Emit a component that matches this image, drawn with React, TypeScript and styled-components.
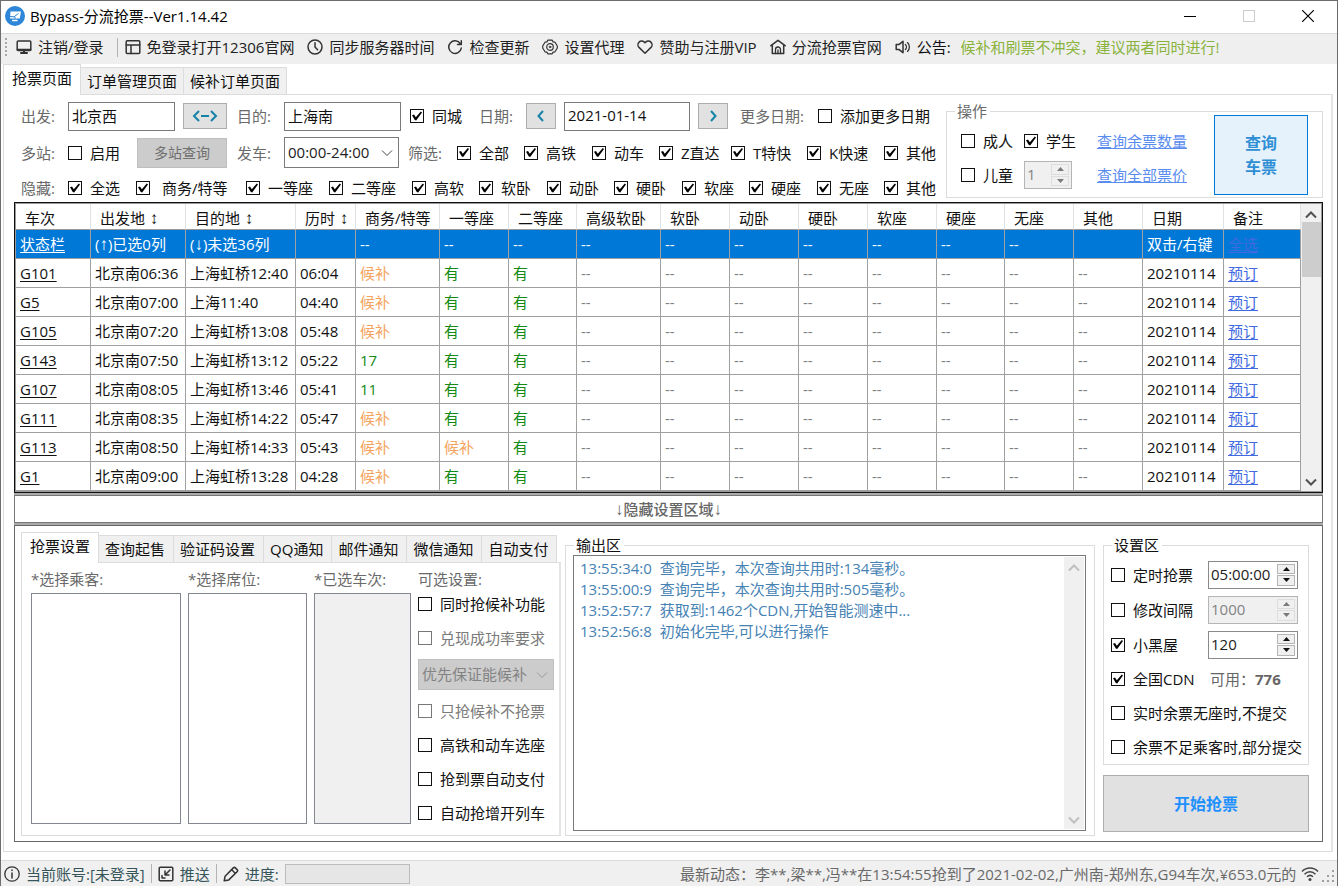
import React from "react";
import styled, { createGlobalStyle, css } from "styled-components";

const GlobalStyle = createGlobalStyle`
  * { box-sizing: border-box; }
  body { margin: 0; background: #ffffff; }
  body, button, input, select, textarea {
    font-family: "Open Sans", "Noto Sans CJK SC", sans-serif;
    font-size: 15px;
    line-height: 20px;
    color: #111111;
  }
`;

/* ---------- window frame ---------- */

const Window = styled.div`
  display: flex;
  flex-direction: column;
  min-height: 100vh;
  border: 1px solid #6e6c6e;
  border-bottom: 0;
  background: #ffffff;
`;

const TitleBar = styled.header`
  display: flex;
  align-items: center;
  height: 32px;
  padding: 0 0 2px 4px;
`;

const Title = styled.h1`
  flex: 1;
  margin: 0 0 0 5px;
  font-size: 15px;
  font-weight: 400;
  color: #000000;
`;

const CaptionButton = styled.button`
  display: flex;
  align-items: center;
  justify-content: center;
  width: 59px;
  height: 30px;
  padding: 0;
  border: 0;
  background: none;
`;

const Toolbar = styled.nav`
  display: flex;
  align-items: center;
  gap: 13px;
  height: 31px;
  padding: 0 0 4px 4px;
  border-top: 1px solid #dadada;
  background: #efefef;
  white-space: nowrap;
  overflow: hidden;
`;

const ToolItem = styled.button`
  display: flex;
  align-items: center;
  gap: 6px;
  padding: 0;
  border: 0;
  background: none;
  color: #222222;
`;

const Notice = styled.div`
  display: flex;
  align-items: center;
  gap: 6px;
  & > b { font-weight: 400; margin-right: 4px; }
  & > span { color: #8ab33c; }
`;

const Grip = styled.span`
  width: 2px;
  height: 18px;
  margin-right: -4px;
  background: repeating-linear-gradient(#a8a8a8 0 2px, transparent 2px 4px);
`;

const Divider = styled.span`
  width: 1px;
  height: 19px;
  background: #b4b4b4;
`;

const ToolDivider = styled(Divider)`
  margin-right: -6px;
`;

/* ---------- tabs ---------- */

const Tab = styled.button<{ $active?: boolean }>`
  position: relative;
  height: 27px;
  padding: 0 6px 0 6px;
  border: 1px solid #dcdcdc;
  border-left: 0;
  border-bottom: 0;
  background: #f0f0f0;
  white-space: nowrap;
  ${(p) =>
    p.$active &&
    css`
      height: 31px;
      margin-bottom: -1px;
      padding: 0 8px 4px 8px;
      border-left: 1px solid #dcdcdc;
      background: #ffffff;
    `}
`;

const TabList = styled.div<{ $roomy?: boolean }>`
  display: flex;
  align-items: flex-end;
  height: 30px;
  & > ${Tab} {
    ${(p) => p.$roomy && "padding-right: 8px;"}
  }
`;

const Page = styled.main`
  display: flex;
  flex: 1;
  flex-direction: column;
  margin: 0 4px 0 2px;
`;

const PageBody = styled.section`
  display: flex;
  flex: 1;
  flex-direction: column;
  padding: 6px 8px 9px 10px;
  border: 1px solid #dcdcdc;
  border-right: 2px solid #e4e4e4;
`;

/* ---------- form parts ---------- */

const Caption = styled.label`
  color: #6a6a6a;
  white-space: nowrap;
`;

const CheckLabel = styled.label<{ $wide?: boolean; $muted?: boolean }>`
  display: inline-flex;
  align-items: center;
  gap: ${(p) => (p.$wide ? 12 : 8)}px;
  color: ${(p) => (p.$muted ? "#7a7a7a" : "#111111")};
  white-space: nowrap;
`;

const CheckBox = styled.input`
  appearance: none;
  flex: none;
  display: grid;
  place-items: center;
  width: 14px;
  height: 14px;
  margin: 0;
  border: 1px solid #111111;
  background: #ffffff;
  &:disabled { border-color: #777777; }
  &:checked::before {
    content: "";
    width: 10px;
    height: 10px;
    background: #000000;
    clip-path: polygon(0 42%, 20% 36%, 38% 62%, 88% 4%, 100% 16%, 42% 94%, 28% 90%);
  }
`;

type CheckProps = {
  text: string;
  on?: boolean;
  wide?: boolean;
  disabled?: boolean;
};

const Check = ({ text, on, wide, disabled }: CheckProps) => (
  <CheckLabel $wide={wide} $muted={disabled}>
    <CheckBox type="checkbox" defaultChecked={on} disabled={disabled} />
    {text}
  </CheckLabel>
);

const TextBox = styled.input<{ $w: number }>`
  width: ${(p) => p.$w}px;
  height: 29px;
  padding: 0 3px 2px;
  border: 1px solid #7a7a7a;
  background: #ffffff;
`;

const SmallButton = styled.button<{ $w: number }>`
  display: flex;
  align-items: center;
  justify-content: center;
  width: ${(p) => p.$w}px;
  height: 26px;
  padding: 0;
  border: 1px solid #adadad;
  background: #e1e1e1;
`;

const FlatButton = styled(SmallButton)`
  height: 30px;
  border-color: #bfbfbf;
  background: #cccccc;
  font-size: 14px;
  color: #6f6f6f;
`;

const SelectWrap = styled.span<{ $w: number; $muted?: boolean }>`
  display: inline-flex;
  align-items: center;
  width: ${(p) => p.$w}px;
  height: 31px;
  border: 1px solid ${(p) => (p.$muted ? "#bfbfbf" : "#7a7a7a")};
  background: ${(p) => (p.$muted ? "#cccccc" : "#ffffff")};
  & > select {
    flex: 1;
    min-width: 0;
    padding: 0 0 2px 3px;
    border: 0;
    appearance: none;
    background: none;
    color: ${(p) => (p.$muted ? "#838383" : "#222222")};
    opacity: 1;
  }
  & > svg { flex: none; margin-right: 4px; }
`;

const SpinWrap = styled.span<{ $w: number; $muted?: boolean }>`
  display: flex;
  width: ${(p) => p.$w}px;
  height: 28px;
  padding: 2px;
  border: 1px solid ${(p) => (p.$muted ? "#b5b5b5" : "#8a8a8a")};
  background: ${(p) => (p.$muted ? "#f0f0f0" : "#ffffff")};
  & > input {
    flex: 1;
    min-width: 0;
    width: 0;
    padding: 0 0 2px;
    border: 0;
    background: none;
    color: ${(p) => (p.$muted ? "#838383" : "#222222")};
  }
`;

const SpinButtons = styled.span`
  display: grid;
  grid-template-rows: 1fr 1fr;
  gap: 1px;
  width: 18px;
`;

const SpinButton = styled.button<{ $muted?: boolean }>`
  display: grid;
  place-items: center;
  padding: 0;
  border: 1px solid ${(p) => (p.$muted ? "#dddddd" : "#b5b5b5")};
  background: #f0f0f0;
  color: ${(p) => (p.$muted ? "#7a7a7a" : "#111111")};
`;

const Triangle = ({ down }: { down?: boolean }) => (
  <svg width="7" height="4" viewBox="0 0 7 4">
    <path d={down ? "M0 0h7L3.500 4z" : "M0 4h7L3.500 0z"} fill="currentColor" />
  </svg>
);

type SpinProps = { value: string; label: string; w: number; disabled?: boolean };

const Spin = ({ value, label, w, disabled }: SpinProps) => (
  <SpinWrap $w={w} $muted={disabled}>
    <input type="text" aria-label={label} defaultValue={value} disabled={disabled} />
    <SpinButtons>
      <SpinButton aria-label={label + "增加"} $muted={disabled} disabled={disabled}>
        <Triangle />
      </SpinButton>
      <SpinButton aria-label={label + "减少"} $muted={disabled} disabled={disabled}>
        <Triangle down />
      </SpinButton>
    </SpinButtons>
  </SpinWrap>
);

type ChevronProps = { dir: "up" | "down" | "left" | "right"; color: string; width?: number };

const chevronPaths = {
  up: "M2 9.500L7 4.500L12 9.500",
  down: "M2 4.500L7 9.500L12 4.500",
  left: "M9 2L4.500 7L9 12",
  right: "M5 2L9.500 7L5 12",
};

const Chevron = ({ dir, color, width = 2 }: ChevronProps) => (
  <svg width="14" height="14" viewBox="0 0 14 14" fill="none" stroke={color} strokeWidth={width}>
    <path d={chevronPaths[dir]} />
  </svg>
);

const Group = styled.fieldset`
  min-width: 0;
  margin: 0;
  padding: 0;
  border: 1px solid #dcdcdc;
`;

const Legend = styled.legend<{ $muted?: boolean }>`
  margin-left: 8px;
  padding: 0 3px 0 2px;
  height: 20px;
  color: ${(p) => (p.$muted ? "#6a6a6a" : "#111111")};
`;

/* ---------- filters ---------- */

const Filters = styled.div`
  display: flex;
  justify-content: space-between;
  padding-left: 7px;
  height: 101px;
`;

const FilterRows = styled.div`
  display: grid;
  grid-template-rows: 30px 43px 28px;
`;

const FilterRow = styled.div<{ $cols: string }>`
  display: grid;
  grid-template-columns: ${(p) => p.$cols};
  align-items: center;
  justify-items: start;
`;

const ActionGroup = styled(Group)`
  width: 377px;
  margin-bottom: 4px;
`;

const Actions = styled.div`
  display: grid;
  grid-template-columns: 63px 66px auto 94px;
  grid-template-rows: 34px 34px;
  align-items: center;
  padding: 3px 14px 0 14px;
`;

const ActionLink = styled.a`
  padding-left: 7px;
  color: #5b8def;
  text-decoration: underline;
`;

const QueryButton = styled.button`
  grid-column: 4;
  grid-row: 1 / 3;
  align-self: start;
  height: 80px;
  margin-top: -9px;
  padding: 0 24px;
  border: 1px solid #0078d7;
  background: #e5f1fb;
  color: #2f8fd5;
  font-size: 16px;
  font-weight: 700;
  line-height: 24px;
`;

/* ---------- table ---------- */

const Stack = styled.div`
  display: flex;
  flex: 1;
  flex-direction: column;
  gap: 2px;
  background: #ababab;
`;

const TableFrame = styled.div`
  display: flex;
  border: 1px solid #111111;
  outline: 1px solid #999999;
  outline-offset: -2px;
  padding: 1px;
  background: #ffffff;
`;

const Trains = styled.table`
  flex: 1;
  width: 0;
  table-layout: fixed;
  border-collapse: separate;
  border-spacing: 0;
`;

const HeadCell = styled.th`
  height: 26px;
  padding: 2px 0 0 9px;
  border-right: 1px solid #e2e2e2;
  border-bottom: 1px solid #999999;
  font-weight: 400;
  text-align: left;
  white-space: nowrap;
`;

const Row = styled.tr<{ $selected?: boolean }>`
  background: ${(p) => (p.$selected ? "#0078d7" : "#ffffff")};
`;

const toneColors = {
  text: "#111111",
  light: "#ffffff",
  wait: "#f4a460",
  have: "#138a13",
  none: "#808080",
  ghost: "#4169e1",
};

type Tone = keyof typeof toneColors;

const Cell = styled.td<{ $tone: Tone }>`
  height: 29px;
  padding: 0 0 0 4px;
  border-right: 1px solid #a0a0a0;
  border-bottom: 1px solid #a0a0a0;
  color: ${(p) => toneColors[p.$tone]};
  white-space: nowrap;
  overflow: hidden;
  & > a { color: inherit; text-underline-offset: 2px; }
`;

const Arrow = styled.span`
  font-family: "Liberation Sans", sans-serif;
  font-size: 17px;
  line-height: 16px;
`;

const ScrollTrack = styled.div`
  display: flex;
  flex: none;
  flex-direction: column;
  justify-content: space-between;
  align-items: center;
  width: 20px;
  padding: 4px 0 2px;
  background: #f0f0f0;
`;

const Thumb = styled.div`
  align-self: stretch;
  height: 55px;
  margin: 0 0 auto 1px;
  background: #cdcdcd;
`;

const Splitter = styled.button`
  height: 28px;
  padding: 0;
  border: 1px solid #777777;
  background: #ffffff;
  color: #666666;
  font-weight: 500;
`;

/* ---------- settings ---------- */

const Settings = styled.div`
  display: flex;
  flex: 1;
  padding: 6px 13px 5px 6px;
  border: 1px solid #666666;
  background: #ffffff;
`;

const TabbedArea = styled.div`
  display: flex;
  flex-direction: column;
  width: 540px;
  margin-right: 4px;
`;

const TabbedBody = styled.div`
  display: grid;
  flex: 1;
  grid-template-columns: 150px 119px 97px 136px;
  grid-template-rows: 18px auto;
  column-gap: 7px;
  padding: 6px 5px 11px 9px;
  border: 1px solid #dcdcdc;
  border-right: 2px solid #e4e4e4;
`;

const ListBox = styled.div<{ $muted?: boolean }>`
  min-height: 231px;
  margin-top: 6px;
  border: 1px solid #828790;
  background: ${(p) => (p.$muted ? "#f0f0f0" : "#ffffff")};
`;

const Options = styled.div`
  display: grid;
  grid-template-rows: 34px 34px 39px 34px 34px 34px 34px;
  align-content: start;
  align-items: center;
  height: 0;
`;

const OutputGroup = styled(Group)`
  display: flex;
  flex: 1;
  margin: 3px 8px 0 0;
`;

const OutputBox = styled.div`
  display: flex;
  flex: 1;
  margin: 0 8px 4px 7px;
  padding: 1px;
  border: 1px solid #7a7a7a;
`;

const OutputText = styled.textarea`
  flex: 1;
  min-width: 0;
  padding: 1px 0 0 5px;
  border: 0;
  resize: none;
  overflow: hidden;
  background: #ffffff;
  color: #4682b4;
  line-height: 21px;
`;

const SidePanel = styled.div`
  display: flex;
  flex-direction: column;
  gap: 10px;
  width: 206px;
  margin-top: 3px;
`;

const SideRows = styled.div`
  display: grid;
  grid-template-rows: 35px 35px 35px 34px 34px 34px;
  padding: 2px 7px 0 7px;
`;

const SideRow = styled.div`
  display: grid;
  grid-template-columns: 97px auto;
  align-items: center;
`;

const Available = styled.span`
  padding-left: 2px;
  color: #666666;
  white-space: nowrap;
`;

const StartButton = styled.button`
  height: 57px;
  border: 1px solid #adadad;
  background: #e1e1e1;
  color: #1e90ff;
  font-size: 16px;
  font-weight: 700;
`;

/* ---------- status bar ---------- */

const StatusBar = styled.footer`
  display: flex;
  align-items: center;
  gap: 6px;
  height: 27px;
  margin-top: 8px;
  padding: 0 3px 1px;
  border-top: 1px solid #dadada;
  background: #f0f0f0;
  white-space: nowrap;
`;

const StatusItem = styled.span`
  display: flex;
  align-items: center;
  gap: 6px;
  color: #35555a;
`;

const ProgressBar = styled.div`
  width: 125px;
  height: 20px;
  border: 1px solid #bcbcbc;
  background: #e6e6e6;
`;

const Ticker = styled.div`
  width: 621px;
  min-width: 0;
  margin-left: auto;
  overflow: hidden;
  color: #696969;
`;

const Signal = styled.span`
  display: flex;
  gap: 3px;
  align-items: flex-end;
  margin-left: -6px;
`;

/* ---------- icons ---------- */

const Icon = ({ children }: { children: React.ReactNode }) => (
  <svg width="16" height="16" viewBox="0 0 16 16" fill="none" stroke="#333333" strokeWidth="1.500" strokeLinejoin="round" strokeLinecap="round">
    {children}
  </svg>
);

const icons = {
  monitor: (
    <Icon>
      <rect x="1.200" y="2" width="13.600" height="9.500" rx="1" />
      <path d="M1.500 10.700h13M5 14h6M8 11.500V14" strokeWidth="2" />
    </Icon>
  ),
  layout: (
    <Icon>
      <rect x="1.200" y="1.700" width="13.600" height="12.800" rx="1" />
      <path d="M1.200 6h13.600M6 6v8.500" />
    </Icon>
  ),
  clock: (
    <Icon>
      <circle cx="8" cy="8" r="7" />
      <path d="M8 3.800V8l2.600 2.800" />
    </Icon>
  ),
  refresh: (
    <Icon>
      <path d="M13.400 4.800A6.300 6.300 0 1 0 14.300 9M14.300 1.800v3.700h-3.800" />
    </Icon>
  ),
  gear: (
    <Icon>
      <path d="M5.800 1.200h4.400l.9 1.700 1.900.3L15.300 7v2l-2.300 3.800-1.900.3-.9 1.700H5.800l-.9-1.700-1.900-.3L.7 9V7L3 3.200l1.900-.3z" strokeWidth="1.200" />
      <circle cx="8" cy="8" r="3.300" strokeWidth="1.200" />
      <circle cx="8" cy="8" r="0.800" strokeWidth="1" />
    </Icon>
  ),
  heart: (
    <Icon>
      <path d="M8 14.300L2 8.400C.6 6.900.7 4.500 2.100 3.100c1.500-1.500 4.200-1.400 5.900.7 1.700-2.100 4.400-2.200 5.900-.7 1.400 1.400 1.500 3.800.1 5.300z" />
    </Icon>
  ),
  home: (
    <Icon>
      <path d="M.9 6.700L8 1.300l7.100 5.400M2.300 6v8.500h11.400V6" />
      <path d="M5.500 14.500v-4a2.500 2.500 0 0 1 5 0v4M8 11v3.500" strokeWidth="1.300" />
    </Icon>
  ),
  sound: (
    <Icon>
      <path d="M1.200 5.600h2.600L8 2.300v11.400l-4.200-3.300H1.200z" />
      <path d="M10.400 5.500c1.300 1.300 1.300 3.700 0 5M12.500 3.600c2.500 2.300 2.500 6.500 0 8.800" strokeWidth="1.300" />
    </Icon>
  ),
  info: (
    <Icon>
      <circle cx="8" cy="8" r="7.200" strokeWidth="1.300" />
      <path d="M8 7v5M8 4v.5" />
    </Icon>
  ),
  push: (
    <Icon>
      <rect x="1.200" y="1.200" width="13.600" height="13.600" rx="1" />
      <path d="M12 4L7.500 8.500M7 5v4h4M4 9.500V12h3" />
    </Icon>
  ),
  pencil: (
    <Icon>
      <path d="M1.200 14.800l.9-4.600 8.200-8.300a1.500 1.500 0 0 1 2.100 0l1.700 1.700a1.500 1.500 0 0 1 0 2.100l-8.300 8.200zM9 4l3.200 3.200" />
    </Icon>
  ),
};

const Logo = () => (
  <svg width="20" height="20" viewBox="0 0 20 20">
    <circle cx="10" cy="10" r="10" fill="#2e86d9" />
    <path d="M5.500 5.500h10.500l-1.300 7H5z" fill="#ffffff" />
    <path d="M5 10.500l4 .3 4.500-3.300M9 10.800l2 1.700" stroke="#2e86d9" strokeWidth="1" fill="none" />
    <path d="M7 14.500h5.500" stroke="#ffffff" strokeWidth="1.500" />
  </svg>
);

/* ---------- data ---------- */

const tools: [keyof typeof icons, string][] = [
  ["layout", "免登录打开12306官网"],
  ["clock", "同步服务器时间"],
  ["refresh", "检查更新"],
  ["gear", "设置代理"],
  ["heart", "赞助与注册VIP"],
  ["home", "分流抢票官网"],
];

const columns: [string, number, string?][] = [
  ["车次", 75],
  ["出发地", 95, "↕"],
  ["目的地", 110, "↕"],
  ["历时", 60, "↕"],
  ["商务/特等", 84],
  ["一等座", 69],
  ["二等座", 68],
  ["高级软卧", 84],
  ["软卧", 69],
  ["动卧", 69],
  ["硬卧", 69],
  ["软座", 69],
  ["硬座", 68],
  ["无座", 69],
  ["其他", 69],
  ["日期", 81],
  ["备注", 77],
];

const trains: [string, string, string, string, string, string][] = [
  ["G101", "北京南06:36", "上海虹桥12:40", "06:04", "候补", "有"],
  ["G5", "北京南07:00", "上海11:40", "04:40", "候补", "有"],
  ["G105", "北京南07:20", "上海虹桥13:08", "05:48", "候补", "有"],
  ["G143", "北京南07:50", "上海虹桥13:12", "05:22", "17", "有"],
  ["G107", "北京南08:05", "上海虹桥13:46", "05:41", "11", "有"],
  ["G111", "北京南08:35", "上海虹桥14:22", "05:47", "候补", "有"],
  ["G113", "北京南08:50", "上海虹桥14:33", "05:43", "候补", "候补"],
  ["G1", "北京南09:00", "上海虹桥13:28", "04:28", "候补", "有"],
];

const seatTone = (s: string): Tone => (s === "候补" ? "wait" : "have");
const blanks = Array.from({ length: 8 }, (_, i) => i);

const trainTypes = ["全部", "高铁", "动车", "Z直达", "T特快", "K快速", "其他"];
const seatTypes = ["全选", "商务/特等", "一等座", "二等座", "高软", "软卧", "动卧", "硬卧", "软座", "硬座", "无座", "其他"];

const log = [
  "13:55:34:0  查询完毕，本次查询共用时:134毫秒。",
  "13:55:00:9  查询完毕，本次查询共用时:505毫秒。",
  "13:52:57:7  获取到:1462个CDN,开始智能测速中...",
  "13:52:56:8  初始化完毕,可以进行操作",
].join("\n");

/* ---------- sections ---------- */

const FilterArea = () => (
  <Filters>
    <FilterRows>
      <FilterRow $cols="47px 115px 54px 47px 126px 69px 47px 38px 134px 42px 78px auto">
        <Caption htmlFor="from">出发:</Caption>
        <TextBox id="from" $w={107} defaultValue="北京西" />
        <SmallButton $w={44} aria-label="交换">
          <svg width="26" height="12" viewBox="0 0 26 12" fill="none" stroke="#1583a8" strokeWidth="2">
            <path d="M7 1L2 6l5 5M19 1l5 5-5 5M9 6h8" />
          </svg>
        </SmallButton>
        <Caption htmlFor="to">目的:</Caption>
        <TextBox id="to" $w={117} defaultValue="上海南" />
        <Check text="同城" on />
        <Caption htmlFor="date">日期:</Caption>
        <SmallButton $w={30} aria-label="前一天">
          <Chevron dir="left" color="#1583a8" />
        </SmallButton>
        <TextBox id="date" $w={126} defaultValue="2021-01-14" />
        <SmallButton $w={30} aria-label="后一天">
          <Chevron dir="right" color="#1583a8" />
        </SmallButton>
        <Caption as="span">更多日期:</Caption>
        <Check text="添加更多日期" />
      </FilterRow>
      <FilterRow $cols="47px 69px 100px 47px 124px 49px 67px 68px 67px 72px 76px 77px auto">
        <Caption as="span">多站:</Caption>
        <Check text="启用" />
        <FlatButton $w={90} disabled>多站查询</FlatButton>
        <Caption htmlFor="depart">发车:</Caption>
        <SelectWrap $w={115}>
          <select id="depart">
            <option>00:00-24:00</option>
          </select>
          <Chevron dir="down" color="#444444" width={1} />
        </SelectWrap>
        <Caption as="span">筛选:</Caption>
        {trainTypes.map((t) => (
          <Check key={t} text={t} on />
        ))}
      </FilterRow>
      <FilterRow $cols="47px 68px 110px 83px 83px 67px 68px 67px 68px 67px 68px 67px auto">
        <Caption as="span">隐藏:</Caption>
        {seatTypes.map((t, i) => (
          <Check key={t} text={t} on wide={i === 1} />
        ))}
      </FilterRow>
    </FilterRows>
    <ActionGroup>
      <Legend $muted>操作</Legend>
      <Actions>
        <Check text="成人" />
        <Check text="学生" on />
        <ActionLink href="#count">查询余票数量</ActionLink>
        <QueryButton>查询车票</QueryButton>
        <Check text="儿童" />
        <Spin value="1" label="儿童" w={48} disabled />
        <ActionLink href="#price">查询全部票价</ActionLink>
      </Actions>
    </ActionGroup>
  </Filters>
);

const TrainTable = () => (
  <TableFrame>
    <Trains>
      <colgroup>
        {columns.map(([name, width]) => (
          <col key={name} style={{ width }} />
        ))}
      </colgroup>
      <thead>
        <tr>
          {columns.map(([name, , arrow]) => (
            <HeadCell key={name}>
              {name}
              {arrow && <Arrow> {arrow}</Arrow>}
            </HeadCell>
          ))}
        </tr>
      </thead>
      <tbody>
        <Row $selected>
          <Cell $tone="light"><a href="#status">状态栏</a></Cell>
          <Cell $tone="light">(<Arrow>↑</Arrow>)已选0列</Cell>
          <Cell $tone="light">(<Arrow>↓</Arrow>)未选36列</Cell>
          <Cell $tone="light" />
          {Array.from({ length: 10 }, (_, i) => (
            <Cell key={i} $tone="light">--</Cell>
          ))}
          <Cell $tone="light" />
          <Cell $tone="light">双击/右键</Cell>
          <Cell $tone="ghost"><a href="#all">全选</a></Cell>
        </Row>
        {trains.map(([no, from, to, time, business, first]) => (
          <Row key={no}>
            <Cell $tone="text"><a href={"#" + no}>{no}</a></Cell>
            <Cell $tone="text">{from}</Cell>
            <Cell $tone="text">{to}</Cell>
            <Cell $tone="text">{time}</Cell>
            <Cell $tone={seatTone(business)}>{business}</Cell>
            <Cell $tone={seatTone(first)}>{first}</Cell>
            <Cell $tone="have">有</Cell>
            {blanks.map((i) => (
              <Cell key={i} $tone="none">--</Cell>
            ))}
            <Cell $tone="text">20210114</Cell>
            <Cell $tone="ghost"><a href={"#book-" + no}>预订</a></Cell>
          </Row>
        ))}
      </tbody>
    </Trains>
    <ScrollTrack>
      <Chevron dir="up" color="#505050" />
      <Thumb />
      <Chevron dir="down" color="#505050" />
    </ScrollTrack>
  </TableFrame>
);

const SettingsArea = () => (
  <Settings>
    <TabbedArea>
      <TabList role="tablist" $roomy>
        <Tab role="tab" $active>抢票设置</Tab>
        {["查询起售", "验证码设置", "QQ通知", "邮件通知", "微信通知", "自动支付"].map((t) => (
          <Tab key={t} role="tab">{t}</Tab>
        ))}
      </TabList>
      <TabbedBody>
        <Caption as="span">*选择乘客:</Caption>
        <Caption as="span">*选择席位:</Caption>
        <Caption as="span">*已选车次:</Caption>
        <Caption as="span">可选设置:</Caption>
        <ListBox />
        <ListBox />
        <ListBox $muted />
        <Options>
          <Check text="同时抢候补功能" />
          <Check text="兑现成功率要求" disabled />
          <SelectWrap $w={136} $muted>
            <select aria-label="候补优先方式" disabled>
              <option>优先保证能候补</option>
            </select>
            <Chevron dir="down" color="#999999" width={1} />
          </SelectWrap>
          <Check text="只抢候补不抢票" disabled />
          <Check text="高铁和动车选座" />
          <Check text="抢到票自动支付" />
          <Check text="自动抢增开列车" />
        </Options>
      </TabbedBody>
    </TabbedArea>
    <OutputGroup>
      <Legend>输出区</Legend>
      <OutputBox>
        <OutputText readOnly aria-label="输出区" value={log} />
        <ScrollTrack>
          <Chevron dir="up" color="#bfbfbf" />
          <Chevron dir="down" color="#bfbfbf" />
        </ScrollTrack>
      </OutputBox>
    </OutputGroup>
    <SidePanel>
      <Group>
        <Legend>设置区</Legend>
        <SideRows>
          <SideRow>
            <Check text="定时抢票" />
            <Spin value="05:00:00" label="定时" w={90} />
          </SideRow>
          <SideRow>
            <Check text="修改间隔" />
            <Spin value="1000" label="间隔" w={90} disabled />
          </SideRow>
          <SideRow>
            <Check text="小黑屋" on />
            <Spin value="120" label="小黑屋" w={90} />
          </SideRow>
          <SideRow>
            <Check text="全国CDN" on />
            <Available>可用：<b>776</b></Available>
          </SideRow>
          <SideRow>
            <Check text="实时余票无座时,不提交" />
          </SideRow>
          <SideRow>
            <Check text="余票不足乘客时,部分提交" />
          </SideRow>
        </SideRows>
      </Group>
      <StartButton>开始抢票</StartButton>
    </SidePanel>
  </Settings>
);

const App = () => (
  <>
    <GlobalStyle />
    <Window>
      <TitleBar>
        <Logo />
        <Title>Bypass-分流抢票--Ver1.14.42</Title>
        <CaptionButton aria-label="最小化">
          <svg width="12" height="12" viewBox="0 0 12 12"><path d="M0 6.500h12" stroke="#000000" /></svg>
        </CaptionButton>
        <CaptionButton aria-label="最大化" disabled>
          <svg width="12" height="12" viewBox="0 0 12 12"><rect x="0.500" y="0.500" width="11" height="11" fill="none" stroke="#cccccc" /></svg>
        </CaptionButton>
        <CaptionButton aria-label="关闭">
          <svg width="12" height="12" viewBox="0 0 12 12"><path d="M0 0l12 12M12 0L0 12" stroke="#000000" strokeWidth="1.200" /></svg>
        </CaptionButton>
      </TitleBar>
      <Toolbar>
        <Grip />
        <ToolItem>{icons.monitor}注销/登录</ToolItem>
        <ToolDivider />
        {tools.map(([icon, text]) => (
          <ToolItem key={text}>{icons[icon]}{text}</ToolItem>
        ))}
        <Notice>
          {icons.sound}
          <b>公告:</b>
          <span>候补和刷票不冲突，建议两者同时进行!</span>
        </Notice>
      </Toolbar>
      <Page>
        <TabList role="tablist">
          <Tab role="tab" $active>抢票页面</Tab>
          <Tab role="tab">订单管理页面</Tab>
          <Tab role="tab">候补订单页面</Tab>
        </TabList>
        <PageBody>
          <FilterArea />
          <Stack>
            <TrainTable />
            <Splitter><Arrow>↓</Arrow>隐藏设置区域<Arrow>↓</Arrow></Splitter>
            <SettingsArea />
          </Stack>
        </PageBody>
      </Page>
      <StatusBar>
        <StatusItem>{icons.info}当前账号:[未登录]</StatusItem>
        <Divider />
        <StatusItem>{icons.push}推送</StatusItem>
        <Divider />
        <StatusItem>{icons.pencil}进度:</StatusItem>
        <ProgressBar role="progressbar" aria-label="进度" />
        <Ticker>最新动态：李**,梁**,冯**在13:54:55抢到了2021-02-02,广州南-郑州东,G94车次,¥653.0元的</Ticker>
        <Signal>
          <svg width="18" height="16" viewBox="0 0 18 16" fill="none" stroke="#444444" strokeWidth="1.500">
            <path d="M1 5.500c4.500-4.600 11.500-4.600 16 0M3.500 8.200c3.200-3.200 7.800-3.200 11 0M6 10.800c1.800-1.700 4.200-1.700 6 0" />
            <circle cx="9" cy="13.500" r="1.500" fill="#444444" stroke="none" />
          </svg>
          <svg width="12" height="12" viewBox="0 0 12 12" fill="#a0a0a0">
            <path d="M10 0h2v2h-2zM5 5h2v2H5zM10 5h2v2h-2zM0 10h2v2H0zM5 10h2v2H5zM10 10h2v2h-2z" />
          </svg>
        </Signal>
      </StatusBar>
    </Window>
  </>
);

export default App;
